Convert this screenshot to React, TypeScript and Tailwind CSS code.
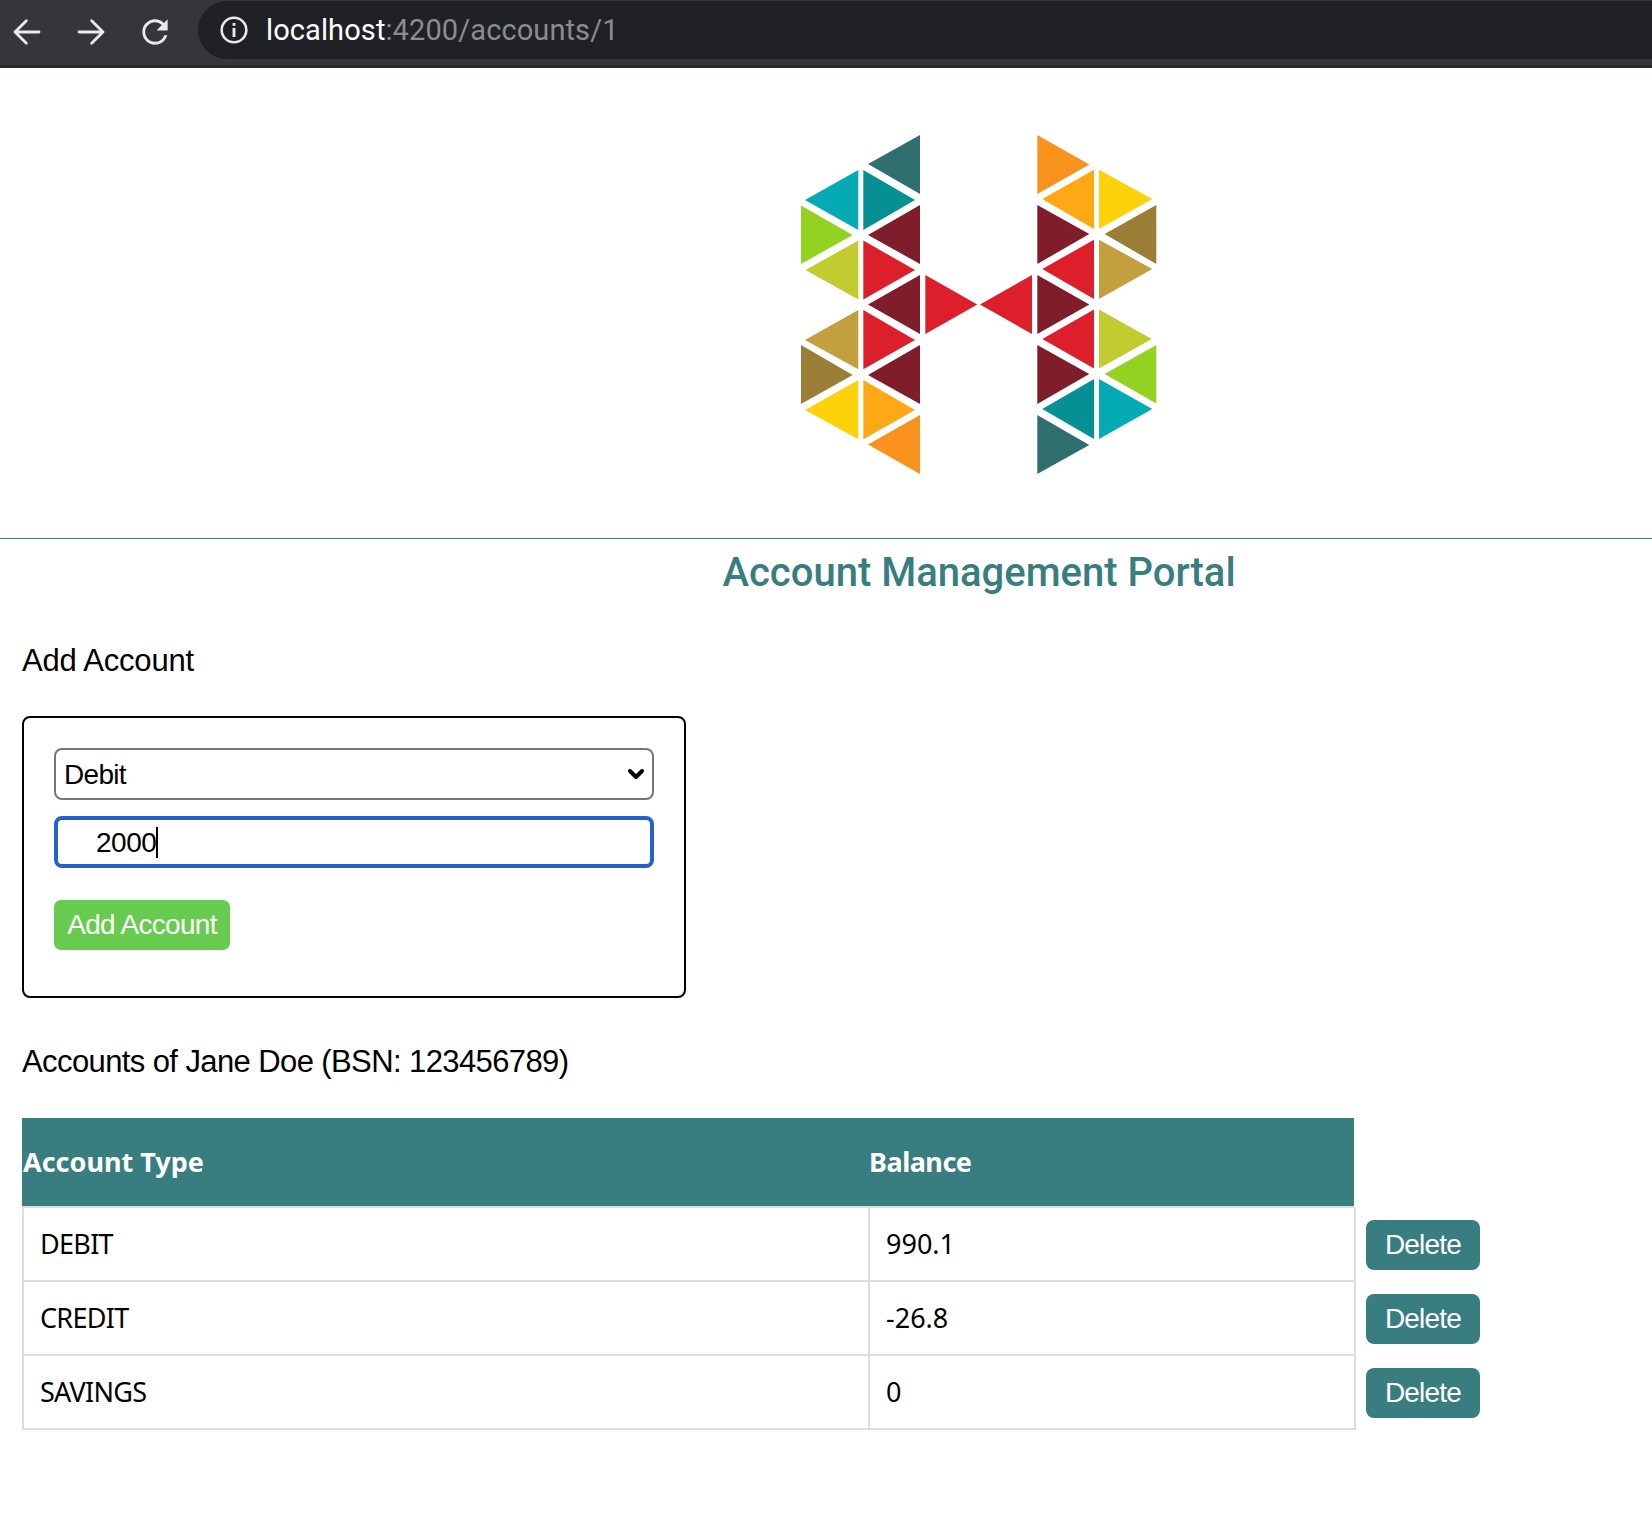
import { ChevronDown } from "lucide-react";

type Tri = { points: [number, number][]; fill: string };

const TEAL = "#2f6f70";
const CYAN = "#04abb5";
const DEEP = "#069094";
const GREEN = "#93d220";
const MAROON = "#7f1d2b";
const OLIVE = "#c2cb30";
const RED = "#dc1f2a";
const TAN = "#c49f3f";
const BROWN = "#9a7e35";
const YELLOW = "#fed20b";
const AMBER = "#fea816";
const ORANGE = "#fa931d";

// left half of the logo, page coordinates minus the svg origin (800, 130)
const leftHalf: Tri[] = [
  { points: [[120, 5], [120, 64], [68, 34]], fill: TEAL },
  { points: [[58.3, 40], [58.3, 100], [5, 70]], fill: CYAN },
  { points: [[63.3, 40], [63.3, 100], [115, 70]], fill: DEEP },
  { points: [[1, 75.5], [1, 134], [52.7, 105]], fill: GREEN },
  { points: [[120, 75], [120, 134], [68, 105]], fill: MAROON },
  { points: [[58.3, 110.5], [58.3, 169.5], [5.5, 140]], fill: OLIVE },
  { points: [[63.3, 110.5], [63.3, 169.5], [115, 140]], fill: RED },
  { points: [[120, 145], [120, 204], [68, 174.5]], fill: MAROON },
  { points: [[125.3, 145], [125.3, 204], [177.3, 174.5]], fill: RED },
  { points: [[58.3, 180], [58.3, 239.3], [5, 210]], fill: TAN },
  { points: [[63.3, 180], [63.3, 239.3], [115, 210]], fill: RED },
  { points: [[1, 215], [1, 274], [52.7, 245]], fill: BROWN },
  { points: [[120, 215], [120, 274], [68, 245]], fill: MAROON },
  { points: [[58.3, 250], [58.3, 309.3], [5, 280]], fill: YELLOW },
  { points: [[63.3, 250], [63.3, 309.3], [115, 280]], fill: AMBER },
  { points: [[120, 285], [120, 344], [68, 314.5]], fill: ORANGE },
];

function Logo() {
  return (
    <svg width="358" height="350" viewBox="0 0 358 350">
      {leftHalf.map((t, i) => (
        <polygon key={i} points={t.points.map((p) => p.join(",")).join(" ")} fill={t.fill} />
      ))}
      {/* the right half is the left half turned by 180 degrees */}
      <g transform="rotate(180 178.65 174.5)">
        {leftHalf.map((t, i) => (
          <polygon key={i} points={t.points.map((p) => p.join(",")).join(" ")} fill={t.fill} />
        ))}
      </g>
    </svg>
  );
}

function BrowserBar() {
  return (
    <div className="flex h-[68px] items-start bg-[#35363a] border-b-[3px] border-[#2a2b2e] text-[#e8eaed]">
      <div className="flex h-[63px] items-center pl-[11px] gap-[32px] w-[198px]">
        <svg viewBox="0 0 24 24" fill="none" stroke="currentColor" strokeWidth="2.1" strokeLinecap="round" strokeLinejoin="round" className="w-[32px] h-[32px]">
          <path d="M21 12H3M11.5 3.5 3 12l8.5 8.5" />
        </svg>
        <svg viewBox="0 0 24 24" fill="none" stroke="currentColor" strokeWidth="2.1" strokeLinecap="round" strokeLinejoin="round" className="w-[32px] h-[32px]">
          <path d="M3 12h18M12.5 3.5 21 12l-8.5 8.5" />
        </svg>
        <svg viewBox="0 0 24 24" fill="currentColor" className="w-[38px] h-[38px] -ml-[3px]">
          <path d="M17.65 6.35A7.958 7.958 0 0 0 12 4c-4.42 0-7.99 3.58-7.99 8s3.57 8 7.99 8c3.73 0 6.84-2.55 7.73-6h-1.9A6.2 6.2 0 0 1 12 18.2c-3.42 0-6.2-2.78-6.2-6.2S8.58 5.8 12 5.8c1.7 0 3.2.7 4.3 1.8L13 11h7V4l-2.35 2.35z" />
        </svg>
      </div>
      <div className="flex flex-1 h-[58px] mt-[1px] items-center rounded-l-[29px] bg-[#202124] pl-[19px]">
        <svg viewBox="0 0 24 24" fill="currentColor" className="w-[34px] h-[34px]">
          <path d="M11 7h2v2h-2zm0 3.6h2V17h-2zM12 2.4a9.6 9.6 0 1 0 0 19.2 9.6 9.6 0 0 0 0-19.2zm0 17.4a7.8 7.8 0 1 1 0-15.6 7.8 7.8 0 0 1 0 15.6z" />
        </svg>
        <div className="ml-[15px] mt-[2px] text-[29px] font-['Roboto',sans-serif] tracking-[0.1px]">
          <span className="text-white">localhost</span>
          <span className="text-[#8b8c8f]">:4200/accounts/1</span>
        </div>
      </div>
    </div>
  );
}

const accounts = [
  { type: "DEBIT", balance: "990.1" },
  { type: "CREDIT", balance: "-26.8" },
  { type: "SAVINGS", balance: "0" },
];

export default function App() {
  return (
    <div className="min-h-[1518px] bg-white font-['Liberation_Sans',sans-serif] text-black">
      <BrowserBar />

      <div className="flex justify-center h-[471px] pt-[62px] pl-[306px] border-b border-[#387d7f]">
        <Logo />
      </div>

      <h1 className="mt-[9px] pl-[306px] text-center text-[40px] leading-[50px] font-medium text-[#387d7f] font-['Roboto',sans-serif]">
        Account Management Portal
      </h1>

      <div className="px-[22px]">
        <h2 className="mt-[43px] text-[31px] leading-[40px] tracking-[-0.2px]">Add Account</h2>

        <form className="mt-[35px] w-[664px] h-[282px] rounded-[8px] border-2 border-black px-[30px] pt-[30px]">
          <div className="relative">
            <select className="block w-full h-[52px] appearance-none rounded-[8px] border-2 border-[#767676] pl-[8px] pt-[2px] text-[28px] tracking-[-0.7px] bg-white">
              <option>Debit</option>
            </select>
            <ChevronDown strokeWidth={4} className="absolute right-[6px] top-[14px] w-[24px] h-[24px]" />
          </div>
          <div className="relative mt-[16px]">
            <input
              readOnly
              value="2000"
              className="block w-full h-[52px] rounded-[8px] border-[4px] border-[#2561c9] pl-[38px] pt-[2px] text-[28px] tracking-[-0.5px] outline-none"
            />
            <div className="absolute left-[102px] top-[11px] w-[2px] h-[31px] bg-black" />
          </div>
          <button type="button" className="mt-[32px] block w-[176px] h-[50px] rounded-[7px] bg-[#67cb4f] text-[28px] tracking-[-0.7px] text-white">
            Add Account
          </button>
        </form>

        <h2 className="mt-[44px] text-[31px] leading-[40px] tracking-[-0.6px]">Accounts of Jane Doe (BSN: 123456789)</h2>

        <table className="mt-[36px] border-separate border-spacing-0 font-['Noto_Sans',sans-serif] text-[27px]">
          <thead>
            <tr className="h-[90px] text-left text-white">
              <th className="w-[846px] bg-[#387d7f] border-b-2 border-[#dddddd] pl-[1px] font-bold">Account Type</th>
              <th className="w-[488px] bg-[#387d7f] border-b-2 border-r-2 border-b-[#dddddd] border-r-white pl-[1px] font-bold tracking-[-0.5px]">Balance</th>
              <th />
            </tr>
          </thead>
          <tbody>
            {accounts.map((account) => (
              <tr key={account.type} className="h-[74px]">
                <td className="border-l-2 border-b-2 border-[#dddddd] pl-[16px] tracking-[-0.7px]">{account.type}</td>
                <td className="border-l-2 border-b-2 border-r-2 border-[#dddddd] pl-[16px]">{account.balance}</td>
                <td className="pl-[10px]">
                  <button type="button" className="block w-[114px] h-[50px] rounded-[8px] bg-[#387d7f] font-['Liberation_Sans',sans-serif] text-[28px] tracking-[-0.8px] text-white">
                    Delete
                  </button>
                </td>
              </tr>
            ))}
          </tbody>
        </table>
      </div>
    </div>
  );
}
